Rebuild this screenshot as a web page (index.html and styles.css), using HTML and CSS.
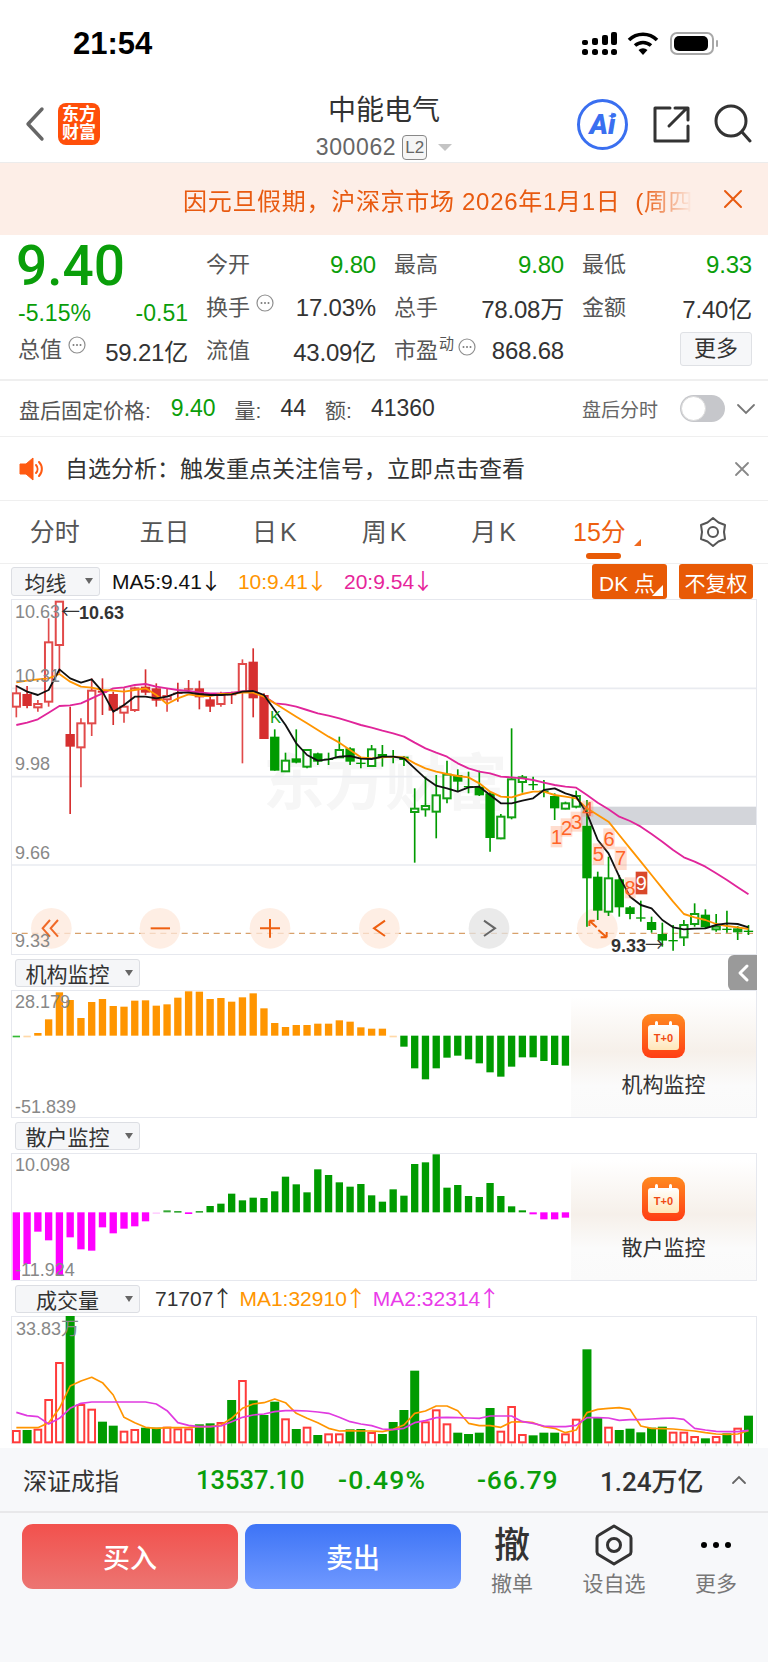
FILE: index.html
```html
<!DOCTYPE html>
<html lang="zh-CN">
<head>
    <meta charset="UTF-8">
    <meta name="viewport" content="width=device-width, initial-scale=1.0">
    <title>中能电气</title>
    <link rel="stylesheet" href="styles.css">
</head>
<body>
    <svg class="sprite">
        <symbol id="info" viewBox="0 0 18 18">
            <circle cx="9" cy="9" r="8" fill="none" stroke="#8f8f8f" stroke-width="1.2"/>
            <circle cx="5.5" cy="9" r="1" fill="#7a7a7a"/>
            <circle cx="9" cy="9" r="1" fill="#7a7a7a"/>
            <circle cx="12.5" cy="9" r="1" fill="#7a7a7a"/>
        </symbol>
    </svg>

    <div class="status">
        <span class="time">21:54</span>
        <div class="status-icons">
            <svg class="signal" width="36" height="24" viewBox="0 0 36 24">
                <rect x="0" y="8" width="6" height="5" rx="2"/>
                <rect x="0" y="17" width="6" height="6" rx="2.5"/>
                <rect x="10" y="6" width="6" height="7" rx="2"/>
                <rect x="10" y="17" width="6" height="6" rx="2.5"/>
                <rect x="20" y="3" width="6" height="10" rx="2"/>
                <rect x="20" y="17" width="6" height="6" rx="2.5"/>
                <rect x="29" y="0" width="6" height="13" rx="2"/>
                <rect x="29" y="17" width="6" height="6" rx="2.5"/>
            </svg>
            <svg width="32" height="24" viewBox="0 0 32 24">
                <path d="M2 8 A20 20 0 0 1 30 8" fill="none" stroke="#000" stroke-width="3.6"/>
                <path d="M8 13.5 A12 12 0 0 1 24 13.5" fill="none" stroke="#000" stroke-width="3.6"/>
                <path d="M11.5 18 A7 7 0 0 1 20.5 18 L16 23 Z"/>
            </svg>
            <div class="battery"><div class="battery-fill"></div></div>
        </div>
    </div>

    <div class="nav">
        <div class="nav-left">
            <svg width="20" height="36" viewBox="0 0 20 36">
                <path d="M17 3 L3 18 L17 33" fill="none" stroke="#666" stroke-width="3.4" stroke-linecap="round" stroke-linejoin="round"/>
            </svg>
            <div class="logo"><span>东方</span><span>财富</span></div>
        </div>
        <div class="nav-title">
            <div class="stock-name">中能电气</div>
            <div class="stock-code">
                <span class="code-num">300062</span>
                <span class="l2">L2</span>
                <span class="code-arrow"></span>
            </div>
        </div>
        <div class="nav-right">
            <div class="ai-btn">Ai
                <svg class="ai-star" width="8" height="8" viewBox="0 0 8 8"><path d="M4 0 L5 3 L8 4 L5 5 L4 8 L3 5 L0 4 L3 3 Z" fill="#3a6ff0"/></svg>
            </div>
            <svg width="38" height="38" viewBox="0 0 38 38" fill="none" stroke="#333" stroke-width="3" stroke-linecap="round" stroke-linejoin="round">
                <path d="M18 3 H3 V36 H36 V21"/>
                <path d="M17 21 L35 3 M23 3 H36 V15"/>
            </svg>
            <svg width="38" height="40" viewBox="0 0 38 40" fill="none" stroke="#333" stroke-width="3" stroke-linecap="round">
                <circle cx="17" cy="17" r="15"/>
                <path d="M28 28 L36 37"/>
            </svg>
        </div>
    </div>

    <div class="banner">
        <div class="banner-text">因元旦假期，沪深京市场 2026年1月1日 &nbsp;(周四</div>
        <svg class="banner-close" width="20" height="20" viewBox="0 0 20 20"><path d="M2 2 L18 18 M18 2 L2 18" stroke="#e85a10" stroke-width="2" stroke-linecap="round"/></svg>
    </div>

    <div class="quote">
        <div class="quote-left">
            <div class="price">9.40</div>
            <div class="change"><span>-5.15%</span><span>-0.51</span></div>
            <div class="cell total"><span class="label">总值<svg class="info"><use href="#info"/></svg></span><span class="value">59.21亿</span></div>
        </div>
        <div class="quote-grid">
            <div class="cell"><span class="label">今开</span><span class="value down">9.80</span></div>
            <div class="cell"><span class="label">最高</span><span class="value down">9.80</span></div>
            <div class="cell"><span class="label">最低</span><span class="value down">9.33</span></div>
            <div class="cell"><span class="label">换手<svg class="info"><use href="#info"/></svg></span><span class="value">17.03%</span></div>
            <div class="cell"><span class="label">总手</span><span class="value">78.08万</span></div>
            <div class="cell"><span class="label">金额</span><span class="value">7.40亿</span></div>
            <div class="cell"><span class="label">流值</span><span class="value">43.09亿</span></div>
            <div class="cell"><span class="label">市盈<sup class="dyn">动</sup><svg class="info info-tight"><use href="#info"/></svg></span><span class="value">868.68</span></div>
            <div class="cell cell-end"><button class="more-btn">更多</button></div>
        </div>
    </div>

    <div class="after-hours">
        <span class="ah-title">盘后固定价格:</span>
        <span class="ah-green">9.40</span>
        <span class="ah-key">量:</span>
        <span class="ah-val">44</span>
        <span class="ah-key">额:</span>
        <span class="ah-val">41360</span>
        <span class="ah-switch-label">盘后分时</span>
        <div class="toggle"><div class="knob"></div></div>
        <svg width="20" height="12" viewBox="0 0 20 12"><path d="M2 2 L10 10 L18 2" fill="none" stroke="#777" stroke-width="1.8" stroke-linecap="round"/></svg>
    </div>

    <div class="notice">
        <svg width="26" height="26" viewBox="0 0 26 26">
            <path d="M1 8 H7 L14 2 V24 L7 18 H1 Z" fill="#ff5a12" stroke="#ff5a12" stroke-linejoin="round"/>
            <path d="M17 9 A6 6 0 0 1 17 17 M20 6 A10 10 0 0 1 20 20" fill="none" stroke="#ff5a12" stroke-width="2" stroke-linecap="round"/>
        </svg>
        <span class="notice-text">自选分析：触发重点关注信号，立即点击查看</span>
        <svg class="notice-close" width="16" height="16" viewBox="0 0 16 16"><path d="M2 2 L14 14 M14 2 L2 14" stroke="#888" stroke-width="1.8" stroke-linecap="round"/></svg>
    </div>

    <div class="tabs">
        <div class="tab">分时</div>
        <div class="tab">五日</div>
        <div class="tab">日<span class="tab-k">K</span></div>
        <div class="tab">周<span class="tab-k">K</span></div>
        <div class="tab">月<span class="tab-k">K</span></div>
        <div class="tab tab-active">15分</div>
        <div class="tab">
            <svg width="32" height="32" viewBox="0 0 32 32" fill="none" stroke="#555" stroke-width="2" stroke-linejoin="round">
                <path d="M16 2 L21.5 6.5 L28 9 L27 16 L28 23 L21.5 25.5 L16 30 L10.5 25.5 L4 23 L5 16 L4 9 L10.5 6.5 Z"/>
                <circle cx="16" cy="16" r="5"/>
            </svg>
        </div>
    </div>

    <div class="chart-bar main-bar">
        <div class="select select-ma"><span>均线</span><i></i></div>
        <div class="legend">
            <span class="c-black">MA5:9.41<span class="arr">↓</span></span>
            <span class="c-orange">10:9.41<span class="arr">↓</span></span>
            <span class="c-pink">20:9.54<span class="arr">↓</span></span>
        </div>
        <div class="bar-btns">
            <button class="org-btn org-btn-dk">DK 点</button>
            <button class="org-btn">不复权</button>
        </div>
    </div>
    <div class="chart-box chart-main">
        <svg id="mainChart" viewBox="33 117 2238 1068"></svg>
        <span class="axis axis-a">10.63</span>
        <span class="axis axis-b">10.31</span>
        <span class="axis axis-c">9.98</span>
        <span class="axis axis-d">9.66</span>
        <span class="axis axis-e">9.33</span>
        <span class="mark mark-high"><span class="mark-arrow">←</span>10.63</span>
        <span class="mark mark-low">9.33<span class="mark-arrow">→</span></span>
    </div>

    <div class="chart-bar">
        <div class="select"><span>机构监控</span><i></i></div>
        <div class="side-tab">
            <svg width="14" height="20" viewBox="0 0 14 20"><path d="M11 3 L4 10 L11 17" fill="none" stroke="#fff" stroke-width="3" stroke-linecap="round" stroke-linejoin="round"/></svg>
        </div>
    </div>
    <div class="chart-box chart-sub">
        <svg id="instChart" viewBox="33 120 2238 384"></svg>
        <span class="axis axis-top">28.179</span>
        <span class="axis axis-bottom">-51.839</span>
        <div class="promo">
            <div class="promo-icon"><div class="promo-cal">T+0</div></div>
            <div class="promo-label">机构监控</div>
        </div>
    </div>

    <div class="chart-bar">
        <div class="select"><span>散户监控</span><i></i></div>
    </div>
    <div class="chart-box chart-sub">
        <svg id="retailChart" viewBox="33 609 2238 384"></svg>
        <span class="axis axis-top">10.098</span>
        <span class="axis axis-bottom">-11.924</span>
        <div class="promo">
            <div class="promo-icon"><div class="promo-cal">T+0</div></div>
            <div class="promo-label">散户监控</div>
        </div>
    </div>

    <div class="chart-bar">
        <div class="select"><span>成交量</span><i></i></div>
        <div class="legend legend-vol">
            <span class="c-dark">71707<span class="arr">↑</span></span>
            <span class="c-orange">MA1:32910<span class="arr">↑</span></span>
            <span class="c-magenta">MA2:32314<span class="arr">↑</span></span>
        </div>
    </div>
    <div class="chart-box chart-sub chart-vol">
        <svg id="volChart" viewBox="33 108 2238 384"></svg>
        <span class="axis axis-top">33.83万</span>
    </div>

    <div class="footer">
        <div class="index-row">
            <span class="index-name">深证成指</span>
            <span class="index-num">13537.10</span>
            <span class="index-num index-pct">-0.49%</span>
            <span class="index-num index-chg">-66.79</span>
            <span class="index-amt">1.24万亿</span>
            <svg class="index-caret" width="16" height="10" viewBox="0 0 16 10"><path d="M2 8 L8 2 L14 8" fill="none" stroke="#666" stroke-width="1.8" stroke-linecap="round"/></svg>
        </div>
        <div class="trade-row">
            <button class="trade-btn buy">买入</button>
            <button class="trade-btn sell">卖出</button>
            <div class="trade-item">
                <div class="trade-icon cancel-char">撤</div>
                <span>撤单</span>
            </div>
            <div class="trade-item">
                <div class="trade-icon">
                    <svg width="38" height="42" viewBox="0 0 38 42" fill="none" stroke="#333" stroke-width="3" stroke-linejoin="round">
                        <path d="M19 2 L34 11 Q36 12 36 14 V28 Q36 30 34 31 L19 40 L4 31 Q2 30 2 28 V14 Q2 12 4 11 Z"/>
                        <circle cx="19" cy="21" r="6.5"/>
                    </svg>
                </div>
                <span>设自选</span>
            </div>
            <div class="trade-item">
                <div class="trade-icon">
                    <svg width="32" height="8" viewBox="0 0 32 8"><circle cx="4" cy="4" r="3"/><circle cx="16" cy="4" r="3"/><circle cx="28" cy="4" r="3"/></svg>
                </div>
                <span>更多</span>
            </div>
        </div>
    </div>

    <script src="chart.js"></script>
</body>
</html>
```

FILE: styles.css
```css
* {
    box-sizing: border-box;
}

body {
    margin: 0;
    width: 768px;
    height: 1662px;
    overflow: hidden;
    background-color: #fff;
    color: #333;
    font-family: "Liberation Sans", "Noto Sans CJK SC", sans-serif;
}

button {
    font-family: inherit;
    border: none;
    padding: 0;
}

.sprite {
    display: none;
}

/* status bar */
.status {
    height: 85px;
    display: flex;
    align-items: center;
    padding: 2px 54px 0 73px;
    justify-content: space-between;
}

.time {
    font-size: 31px;
    font-weight: bold;
    color: #000;
}

.status-icons {
    display: flex;
    align-items: center;
    gap: 9px;
}

.battery {
    position: relative;
    width: 44px;
    height: 23px;
    border: 2px solid #a8a8a8;
    border-radius: 7px;
    padding: 2px;
    margin-left: 2px;
}

.battery::after {
    content: "";
    position: absolute;
    right: -6px;
    top: 6px;
    width: 2px;
    height: 7px;
    border-radius: 1px;
    background-color: #a8a8a8;
}

.battery-fill {
    width: 34px;
    height: 15px;
    background-color: #000;
    border-radius: 5px;
}

/* nav */
.nav {
    height: 78px;
    display: grid;
    grid-template-columns: 1fr auto 1fr;
    align-items: center;
    border-bottom: 1px solid #ececec;
}

.nav-left {
    display: flex;
    align-items: center;
    gap: 13px;
    padding-left: 25px;
}

.logo {
    width: 42px;
    height: 42px;
    background-color: #ff4f0a;
    border-radius: 8px;
    color: #fff;
    font-size: 17px;
    font-weight: bold;
    line-height: 18px;
    display: flex;
    flex-direction: column;
    align-items: center;
    justify-content: center;
}

.nav-title {
    text-align: center;
    padding-top: 8px;
}

.stock-name {
    font-size: 28px;
    line-height: 34px;
    color: #333;
}

.stock-code {
    display: flex;
    align-items: center;
    gap: 6px;
    margin-top: 5px;
    font-size: 23px;
    line-height: 28px;
    color: #666;
}

.code-num {
    letter-spacing: 0.6px;
}

.l2 {
    border: 1px solid #888;
    border-radius: 4px;
    font-size: 17px;
    line-height: 23px;
    width: 25px;
    text-align: center;
    background-color: #f5f5f5;
}

.code-arrow {
    width: 0;
    height: 0;
    margin-left: 5px;
    border-left: 7px solid transparent;
    border-right: 7px solid transparent;
    border-top: 7px solid #c4c4c4;
}

.nav-right {
    display: flex;
    align-items: center;
    justify-content: flex-end;
    gap: 24px;
    padding-right: 16px;
}

.ai-btn {
    position: relative;
    width: 51px;
    height: 51px;
    border: 3px solid #3a6ff0;
    border-radius: 50%;
    color: #3a6ff0;
    font-family: Roboto, sans-serif;
    font-size: 28px;
    font-weight: 900;
    font-style: italic;
    line-height: 45px;
    text-align: center;
    margin-top: 2px;
}

.ai-star {
    position: absolute;
    top: 10px;
    right: 9px;
}

/* holiday banner */
.banner {
    height: 72px;
    background-color: #fdeee7;
    display: flex;
    align-items: center;
    padding-left: 183px;
}

.banner-text {
    width: 510px;
    white-space: nowrap;
    font-size: 24px;
    letter-spacing: 0.7px;
    color: #e85a10;
    -webkit-mask-image: linear-gradient(to right, #000 90%, transparent 100%);
    mask-image: linear-gradient(to right, #000 90%, transparent 100%);
}

.banner-close {
    margin-left: 30px;
}

/* quote */
.quote {
    height: 146px;
    display: flex;
    padding: 8px 16px 0 18px;
    border-bottom: 2px solid #efefef;
}

.quote-left {
    width: 170px;
    margin-right: 18px;
    margin-top: -8px;
}

.price {
    font-family: Roboto, sans-serif;
    font-size: 55px;
    font-weight: 500;
    line-height: 62px;
    margin-left: -2px;
    color: #0a9e0a;
}

.change {
    display: flex;
    justify-content: space-between;
    height: 32px;
    line-height: 32px;
    font-size: 23px;
    color: #0a9e0a;
}

.quote-grid {
    flex: 1;
    display: grid;
    grid-template-columns: 170px 170px 170px;
    column-gap: 18px;
    grid-auto-rows: 43px;
}

.cell {
    display: flex;
    align-items: center;
    justify-content: space-between;
    font-size: 24px;
}

.total {
    height: 42px;
}

.cell-end {
    justify-content: flex-end;
}

.label {
    display: flex;
    align-items: flex-start;
    font-size: 22px;
    line-height: 30px;
    color: #555;
}

.value {
    color: #333;
    white-space: nowrap;
    letter-spacing: -0.2px;
}

.value.down {
    color: #0a9e0a;
}

.info {
    width: 18px;
    height: 18px;
    margin-left: 6px;
    margin-top: 1px;
}

.info-tight {
    margin-left: 4px;
    margin-top: 2px;
}

.dyn {
    font-size: 15px;
    line-height: 18px;
    margin-top: -1px;
    margin-left: 1px;
    vertical-align: baseline;
}

.more-btn {
    width: 72px;
    height: 34px;
    margin-top: -3px;
    background-color: #f6f7f9;
    border: 1px solid #dfe1e5;
    border-radius: 3px;
    color: #333;
    font-size: 22px;
    line-height: 30px;
}

/* after hours row */
.after-hours {
    height: 56px;
    display: flex;
    align-items: center;
    padding-left: 19px;
    border-bottom: 1px solid #efefef;
    font-size: 21px;
    color: #555;
}

.ah-green {
    margin-left: 20px;
    color: #0a9e0a;
    font-size: 23px;
}

.ah-key {
    margin-left: 19px;
}

.ah-val {
    margin-left: 19px;
    color: #333;
    font-size: 23px;
}

.ah-switch-label {
    margin-left: auto;
    font-size: 19px;
    color: #666;
}

.toggle {
    width: 45px;
    height: 27px;
    margin: 0 11px 0 22px;
    border-radius: 14px;
    background-color: #c6c7cb;
    padding: 1px;
}

.knob {
    width: 25px;
    height: 25px;
    border-radius: 50%;
    background-color: #fff;
    border: 1px solid #dadada;
}

.after-hours svg {
    margin-right: 12px;
}

/* notice row */
.notice {
    height: 64px;
    display: flex;
    align-items: center;
    padding-left: 19px;
    border-bottom: 1px solid #efefef;
}

.notice-text {
    margin-left: 20px;
    margin-top: -3px;
    font-size: 23px;
    color: #333;
}

.notice-close {
    margin-left: auto;
    margin-right: 18px;
}

/* period tabs */
.tabs {
    height: 63px;
    display: grid;
    grid-template-columns: repeat(7, 1fr);
    align-items: center;
    border-bottom: 1px solid #efefef;
}

.tab {
    position: relative;
    text-align: center;
    font-size: 25px;
    line-height: 32px;
    color: #555;
    display: flex;
    align-items: center;
    justify-content: center;
    white-space: pre;
}

.tab-k {
    margin-left: 3px;
}

.tab-active {
    color: #ee5f10;
    padding-right: 8px;
}

.tab-active::before {
    content: "";
    position: absolute;
    left: 37px;
    right: 37px;
    bottom: -11px;
    height: 6px;
    border-radius: 3px;
    background-color: #e85a06;
}

.tab-active::after {
    content: "";
    position: absolute;
    right: 17px;
    bottom: 2px;
    border-left: 7px solid transparent;
    border-bottom: 7px solid #f0691e;
}

/* toolbars above each chart */
.chart-bar {
    width: 746px;
    height: 35px;
    margin-left: 11px;
    padding-left: 4px;
    display: flex;
    align-items: center;
}

.main-bar {
    padding-left: 0;
}

.select {
    width: 125px;
    height: 28px;
    padding-right: 20px;
    display: flex;
    align-items: center;
    justify-content: center;
    position: relative;
    background-color: #f5f6f8;
    border: 1px solid #dcdee3;
    border-radius: 3px;
    font-size: 21px;
    color: #333;
}

.select i {
    position: absolute;
    right: 6px;
    top: 10px;
    border-left: 4px solid transparent;
    border-right: 4px solid transparent;
    border-top: 6px solid #666;
}

.select-ma {
    width: 89px;
    height: 29px;
}

.legend {
    display: flex;
    gap: 18px;
    margin-left: 12px;
    font-size: 21px;
    white-space: nowrap;
}

.legend-vol {
    gap: 8px;
    margin-left: 15px;
}

.arr {
    font-family: "Noto Sans CJK SC", sans-serif;
    font-size: 22px;
    line-height: 21px;
    margin-left: -2px;
    margin-right: -2px;
}

.c-black { color: #111; }
.c-dark { color: #333; }
.c-orange { color: #ff9500; }
.c-pink { color: #e6259a; }
.c-magenta { color: #e93be9; }

.bar-btns {
    margin-left: auto;
    padding-right: 4px;
    display: flex;
    gap: 12px;
}

.org-btn {
    position: relative;
    width: 74px;
    height: 35px;
    background-color: #e85a06;
    border-radius: 3px;
    color: #fff;
    font-size: 21px;
    white-space: nowrap;
}

.org-btn-dk {
    width: 75px;
    text-align: left;
    padding-left: 7px;
}

.org-btn-dk::after {
    content: "";
    position: absolute;
    right: 4px;
    bottom: 3px;
    border-left: 11px solid transparent;
    border-bottom: 11px solid #fff;
}

.side-tab {
    margin-left: auto;
    width: 29px;
    height: 36px;
    background-color: #9a9a9a;
    border-radius: 6px 0 0 6px;
    display: flex;
    align-items: center;
    justify-content: center;
    align-self: flex-start;
}

/* chart frames */
.chart-box {
    position: relative;
    width: 746px;
    margin-left: 11px;
    outline: 1px solid #e6e8ee;
    outline-offset: -1px;
}

.chart-main {
    height: 356px;
}

.chart-sub {
    height: 128px;
}

.chart-vol {
    outline: none;
    border-top: 1px solid #e6e8ee;
    border-left: 1px solid #e6e8ee;
    border-right: 1px solid #e6e8ee;
}

.chart-box svg {
    display: block;
    width: 100%;
    height: 100%;
    overflow: visible;
}

.chart-vol svg {
    position: absolute;
    left: -1px;
    top: -1px;
    width: 746px;
    height: 128px;
}

.chart-box text {
    font-family: "Liberation Sans", "Noto Sans CJK SC", sans-serif;
}

.axis {
    position: absolute;
    left: 4px;
    font-size: 18px;
    line-height: 20px;
    color: #888;
}

.axis-a { top: 3px; }
.axis-b { top: 67px; }
.axis-c { top: 155px; }
.axis-d { top: 244px; }
.axis-e { top: 332px; }
.axis-top { top: 2px; }
.axis-bottom { bottom: 1px; }

.mark {
    position: absolute;
    font-size: 18px;
    font-weight: bold;
    line-height: 20px;
    white-space: nowrap;
    color: #333;
}

.mark-arrow {
    font-family: "Noto Sans CJK SC", sans-serif;
    font-size: 19px;
    font-weight: 400;
    margin: 0 -1px;
}

.mark-high {
    left: 51px;
    top: 2px;
}

.mark-low {
    left: 600px;
    top: 335px;
}

/* T+0 promo over the chart's right side */
.promo {
    position: absolute;
    top: 1px;
    right: 1px;
    bottom: 1px;
    width: 185px;
    display: flex;
    flex-direction: column;
    align-items: center;
    background: linear-gradient(to bottom, #fff 5%, #f6f0ea 48%, #fbfbfb 75%, #fafafa);
}

.promo-icon {
    width: 43px;
    height: 44px;
    margin-top: 23px;
    border-radius: 9px;
    background: linear-gradient(to bottom, #ff8a20, #ff3d14);
    display: flex;
    align-items: center;
    justify-content: center;
}

.promo-cal {
    position: relative;
    width: 31px;
    height: 25px;
    margin-top: 2px;
    border-radius: 3px;
    background: linear-gradient(to bottom, #fff, #ffe6b8);
    color: #f04a14;
    font-size: 11px;
    font-weight: bold;
    line-height: 27px;
    text-align: center;
}

.promo-cal::before,
.promo-cal::after {
    content: "";
    position: absolute;
    top: -4px;
    width: 3px;
    height: 7px;
    border-radius: 2px;
    background-color: #fff;
}

.promo-cal::before { left: 7px; }
.promo-cal::after { right: 7px; }

.promo-label {
    margin-top: 10px;
    font-size: 21px;
    color: #333;
}

/* footer */
.footer {
    margin-top: 4px;
    height: 214px;
    background-color: #f7f8fa;
}

.index-row {
    height: 65px;
    display: grid;
    grid-template-columns: 173px 142px 139px 123px 139px auto;
    align-items: center;
    padding-left: 23px;
    border-bottom: 2px solid #e8e8ea;
    font-size: 24px;
}

.index-name {
    color: #333;
}

.index-num {
    color: #0a9e0a;
    font-family: Roboto, sans-serif;
    font-weight: 500;
    font-size: 25.5px;
}

.index-pct {
    font-size: 26.5px;
    letter-spacing: 1.2px;
}

.index-chg {
    font-size: 26.5px;
    letter-spacing: 0.8px;
}

.index-amt {
    color: #333;
    font-family: Roboto, "Noto Sans CJK SC", sans-serif;
    font-weight: 500;
    font-size: 26px;
}

.index-caret {
    margin-left: -8px;
}

.trade-row {
    display: flex;
    padding: 11px 0 0 22px;
}

.trade-btn {
    width: 216px;
    height: 65px;
    border-radius: 11px;
    color: #fff;
    font-size: 27px;
    font-weight: 500;
}

.buy {
    margin-right: 7px;
    background: linear-gradient(to bottom, #f2514d, #ec7572);
}

.sell {
    background: linear-gradient(to bottom, #3d74f6, #7099ff);
}

.trade-item {
    width: 102px;
    display: flex;
    flex-direction: column;
    align-items: center;
    font-size: 21px;
    color: #777;
}

.trade-icon {
    height: 42px;
    display: flex;
    align-items: center;
    justify-content: center;
    margin-bottom: 1px;
    color: #333;
}

.cancel-char {
    font-size: 36px;
    font-weight: 500;
    margin-top: -3px;
    margin-bottom: 4px;
}
```

FILE: chart.js
```js
// coordinates below are in chart units: 3 per pixel, measured from x=0, y=560 of the page
const svgNS = 'http://www.w3.org/2000/svg'

const GREEN = '#009b00'
const RED = '#d62f2f'
const ORANGE = '#ff9500'

function add(svg, tag, attrs, text) {
    const el = document.createElementNS(svgNS, tag)
    for (const key in attrs) {
        el.setAttribute(key, attrs[key])
    }
    if (text) {
        el.textContent = text
    }
    svg.appendChild(el)
    return el
}

function barX(i) {
    return 49 + 32.3 * i
}

function drawLine(svg, ys, color, width) {
    const points = ys.map((y, i) => barX(i) + ',' + y).join(' ')
    add(svg, 'polyline', {
        points: points,
        fill: 'none',
        stroke: color,
        'stroke-width': width,
        'stroke-linejoin': 'round'
    })
}

// hi, lo, bodyTop, bodyBottom, type: r hollow red, R solid red, g hollow green, G solid green
const candles = [
    [375, 472, 400, 440, 'r'], [378, 445, 402, 438, 'R'], [420, 455, 432, 442, 'r'],
    [175, 440, 247, 425, 'r'], [125, 340, 125, 255, 'r'], [440, 762, 522, 560, 'R'],
    [475, 682, 490, 562, 'r'], [355, 528, 392, 490, 'r'], [355, 465, 392, 398, 'R'],
    [395, 495, 402, 452, 'R'], [385, 488, 440, 458, 'r'], [380, 456, 385, 450, 'r'],
    [328, 405, 380, 398, 'R'], [370, 440, 385, 422, 'R'], [385, 455, 408, 418, 'r'],
    [368, 425, 398, 402, 'R'], [360, 398, 385, 388, 'R'], [362, 448, 385, 412, 'R'],
    [410, 456, 418, 440, 'R'], [395, 440, 405, 432, 'r'], [395, 432, 402, 405, 'R'],
    [298, 610, 312, 395, 'r'], [265, 472, 305, 415, 'R'], [400, 537, 405, 537, 'R'],
    [508, 632, 530, 632, 'G'], [578, 634, 602, 634, 'g'], [508, 610, 595, 608, 'G'],
    [570, 625, 570, 620, 'g'], [578, 615, 580, 605, 'G'], [578, 615, 596, 600, 'G'],
    [530, 592, 570, 592, 'g'], [562, 615, 565, 605, 'G'], [595, 625, 608, 612, 'G'],
    [555, 620, 568, 618, 'g'], [555, 620, 582, 592, 'G'], [570, 610, 588, 592, 'G'],
    [588, 618, 590, 600, 'G'], [685, 908, 746, 756, 'g'], [650, 770, 738, 748, 'g'],
    [645, 835, 706, 755, 'g'], [602, 730, 644, 715, 'g'], [628, 695, 645, 665, 'G'],
    [635, 700, 678, 682, 'G'], [632, 708, 680, 706, 'G'], [695, 875, 700, 834, 'G'],
    [762, 838, 770, 835, 'g'], [505, 778, 658, 772, 'g'], [645, 698, 652, 666, 'g'],
    [650, 690, 672, 676, 'G'], [660, 712, 692, 696, 'G'], [700, 780, 708, 745, 'G'],
    [725, 748, 730, 746, 'g'], [692, 745, 708, 740, 'g'], [720, 1100, 797, 955, 'G'],
    [935, 1080, 950, 1052, 'G'], [890, 1068, 955, 1055, 'g'], [945, 1070, 958, 1042, 'G'],
    [1038, 1078, 1042, 1062, 'G'], [1022, 1085, 1072, 1076, 'G'], [1070, 1118, 1086, 1110, 'G'],
    [1088, 1160, 1122, 1142, 'G'], [1095, 1172, 1140, 1143, 'G'], [1080, 1158, 1095, 1132, 'g'],
    [1030, 1100, 1062, 1092, 'g'], [1048, 1106, 1064, 1102, 'G'], [1062, 1115, 1100, 1108, 'g'],
    [1052, 1118, 1106, 1110, 'G'], [1098, 1140, 1108, 1114, 'g'], [1095, 1125, 1112, 1115, 'G']
]

const ma5 = [378, 395, 405, 390, 328, 355, 368, 358, 395, 455, 435, 410, 410, 415, 410, 398, 398, 402,
    405, 405, 403, 395, 393, 405, 450, 495, 550, 585, 602, 598, 590, 588, 596, 597, 590, 590, 595, 625,
    655, 677, 685, 695, 682, 680, 705, 730, 730, 722, 715, 690, 685, 700, 710, 760, 840, 880, 950, 1010,
    1035, 1045, 1080, 1102, 1108, 1106, 1105, 1095, 1090, 1092, 1102]
const ma10 = [367, 362, 358, 355, 342, 365, 380, 383, 390, 392, 395, 390, 385, 405, 432, 415, 403, 408,
    408, 402, 402, 398, 398, 410, 430, 450, 470, 490, 510, 530, 548, 570, 592, 595, 592, 590, 592, 610,
    625, 635, 642, 648, 652, 670, 695, 710, 712, 702, 695, 695, 705, 710, 715, 745, 765, 785, 825, 865,
    905, 945, 985, 1025, 1062, 1072, 1080, 1092, 1098, 1102, 1107]
const ma20 = [495, 488, 478, 458, 438, 436, 430, 415, 400, 385, 382, 375, 372, 380, 385, 390, 393, 397,
    400, 400, 398, 394, 393, 408, 430, 433, 440, 450, 460, 467, 475, 485, 495, 503, 512, 520, 530, 548,
    565, 578, 590, 610, 625, 635, 640, 650, 652, 655, 660, 668, 675, 680, 683, 705, 728, 748, 770, 783,
    800, 822, 845, 870, 892, 905, 920, 940, 960, 982, 1003]

const marks = [
    [500, 798, 35, 64, '1'], [530, 775, 35, 55, '2'], [560, 755, 35, 60, '3'],
    [595, 722, 33, 48, '4'], [626, 850, 34, 65, '5'], [658, 805, 34, 63, '6'],
    [692, 860, 36, 70, '7'], [722, 952, 33, 63, '8']
]

function drawCandle(svg, c, i) {
    const x = barX(i)
    const isRed = c[4] === 'r' || c[4] === 'R'
    const color = isRed ? RED : GREEN
    const hollow = c[4] === 'r' || c[4] === 'g'
    add(svg, 'line', { x1: x, x2: x, y1: c[0], y2: c[1], stroke: hollow && isRed ? '#e14a4a' : color, 'stroke-width': 5 })
    const height = Math.max(c[3] - c[2], 4)
    if (hollow) {
        add(svg, 'rect', {
            x: x - 11, y: c[2], width: 22, height: height,
            fill: '#fff', stroke: isRed ? '#e14a4a' : '#12a012', 'stroke-width': 6
        })
    } else {
        add(svg, 'rect', { x: x - 14, y: c[2], width: 28, height: height, fill: color })
    }
}

function drawControl(svg, cx, fill, path, color) {
    add(svg, 'circle', { cx: cx, cy: 1105, r: 61, fill: fill, 'fill-opacity': 0.75 })
    add(svg, 'path', { d: path, fill: 'none', stroke: color, 'stroke-width': 6 })
}

function drawMain() {
    const svg = document.getElementById('mainChart')
    add(svg, 'text', {
        x: 790, y: 735, fill: '#f6f6f6', 'font-size': 183, 'font-weight': 'bold'
    }, '东方财富')
    const grid = [385, 650, 915]
    grid.forEach(y => add(svg, 'line', { x1: 33, x2: 2271, y1: y, y2: y, stroke: '#e9ebf0', 'stroke-width': 5 }))
    add(svg, 'rect', { x: 1742, y: 740, width: 529, height: 55, fill: '#d3d5da' })
    add(svg, 'line', {
        x1: 33, x2: 2271, y1: 1120, y2: 1120, stroke: '#d8a16b', 'stroke-width': 4, 'stroke-dasharray': '18 14'
    })
    const controls = [
        [154, '#fde8db', 'M150 1080 L128 1105 L150 1130 M174 1080 L152 1105 L174 1130', '#f06a28'],
        [480, '#fde8db', 'M452 1105 H510', '#ee5f10'],
        [810, '#fde8db', 'M780 1105 H840 M810 1077 V1133', '#ee5f10'],
        [1138, '#fde8db', 'M1155 1082 L1122 1105 L1155 1128', '#ee5f10'],
        [1467, '#e3e3e3', 'M1452 1082 L1485 1105 L1452 1128', '#666'],
        [1792, '#fde8db', 'M1768 1082 L1790 1102 M1768 1082 V1098 M1768 1082 H1784 M1795 1110 L1820 1132 M1820 1132 V1116 M1820 1132 H1802', '#ee5f10']
    ]
    controls.forEach(c => drawControl(svg, c[0], c[1], c[2], c[3]))
    candles.forEach((c, i) => drawCandle(svg, c, i))
    drawLine(svg, ma20, '#e0259a', 5.5)
    drawLine(svg, ma10, ORANGE, 5.5)
    drawLine(svg, ma5, '#111', 5.5)
    add(svg, 'text', { x: 810, y: 490, fill: '#17a317', 'font-size': 50 }, 'K')
    marks.forEach(m => {
        add(svg, 'rect', { x: m[0] + 1152, y: m[1], width: m[2], height: m[3], fill: '#ff7a45', 'fill-opacity': 0.26 })
        add(svg, 'text', {
            x: m[0] + 1152 + m[2] / 2, y: m[1] + m[3] / 2 + 21, fill: '#ff6427', 'font-size': 60, 'text-anchor': 'middle'
        }, m[4])
    })
    add(svg, 'rect', { x: 1907, y: 935, width: 35, height: 68, fill: '#d9482a' })
    add(svg, 'text', { x: 1924, y: 990, fill: '#fff', 'font-size': 60, 'text-anchor': 'middle' }, '9')
}

function drawBars(svgId, base, bars, width) {
    const svg = document.getElementById(svgId)
    bars.forEach((b, i) => {
        const y = Math.min(b[0], base)
        const h = Math.max(Math.abs(b[0] - base), 5)
        add(svg, 'rect', { x: barX(i) - width / 2, y: y, width: width, height: h, fill: b[1] })
    })
}

function colored(values, color) {
    return values.map(v => [v, color])
}

function drawInst() {
    const M = '#ff9500'
    const bars = [[260, '#35b935'], [259, '#ffd9a8'], [249, M]]
        .concat(colored([208, 127, 150, 204, 156, 147, 168, 170, 152, 151, 167, 163, 143, 124, 125, 147,
            144, 155, 142, 130, 175, 219, 231, 225, 225, 221, 221, 211, 215, 232, 236, 236], M))
        .concat([[259, '#ffd9a8']])
        .concat(colored([290, 355, 388, 355, 323, 317, 328, 340, 367, 380, 350, 322, 322, 333, 345, 347], GREEN))
    drawBars('instChart', 257, bars, 22)
}

function drawRetail() {
    const P = '#ff00ff'
    const bars = colored([990, 942, 845, 871, 975, 862, 898, 902, 832, 850, 836, 829, 814], P)
        .concat([[790, '#ffd0ff'], [781, '#35a835'], [783, '#35a835'], [792, P], [783, '#35a835']])
        .concat(colored([768, 761, 731, 751, 743, 744, 724, 680, 703, 727, 658, 675, 697, 710, 702, 736, 755,
            718, 737, 642, 637, 613, 713, 705, 738, 741, 699, 738, 769, 781], GREEN))
        .concat(colored([793, 808, 808, 803], P))
    drawBars('retailChart', 787, bars, 22)
}

function drawVolume() {
    const svg = document.getElementById('volChart')
    const bars = [[450, 'r'], [450, 'g'], [446, 'r'], [357, 'r'], [246, 'r'], [108, 'g'], [372, 'r'], [386, 'r'],
        [425, 'g'], [437, 'g'], [452, 'r'], [447, 'r'], [443, 'g'], [443, 'g'], [440, 'r'], [445, 'r'], [445, 'r'],
        [433, 'g'], [430, 'g'], [426, 'r'], [360, 'g'], [300, 'r'], [361, 'g'], [405, 'g'], [365, 'g'], [415, 'r'],
        [447, 'g'], [440, 'r'], [465, 'g'], [460, 'r'], [460, 'r'], [448, 'g'], [447, 'g'], [456, 'r'], [462, 'g'],
        [426, 'g'], [390, 'g'], [272, 'g'], [424, 'r'], [388, 'r'], [430, 'r'], [458, 'g'], [462, 'g'], [458, 'g'],
        [384, 'g'], [452, 'r'], [378, 'r'], [462, 'r'], [466, 'g'], [458, 'g'], [458, 'g'], [460, 'r'], [416, 'r'],
        [208, 'g'], [412, 'g'], [440, 'r'], [450, 'g'], [446, 'g'], [457, 'g'], [443, 'g'], [440, 'g'], [455, 'r'],
        [455, 'r'], [468, 'r'], [475, 'g'], [468, 'r'], [460, 'g'], [443, 'r'], [407, 'g']]
    bars.forEach((b, i) => {
        const x = barX(i)
        if (i >= 17) {
            add(svg, 'line', { x1: x, x2: x, y1: 490, y2: 499, stroke: '#aaa', 'stroke-width': 2 })
        }
        if (b[1] === 'g') {
            add(svg, 'rect', { x: x - 13.5, y: b[0], width: 27, height: 490 - b[0], fill: GREEN })
        } else {
            add(svg, 'rect', {
                x: x - 10, y: b[0] + 3, width: 20, height: 487 - b[0] - 3,
                fill: '#fff', stroke: '#ff3b3b', 'stroke-width': 6
            })
        }
    })
    const ma1 = [443, 443, 443, 428, 385, 318, 303, 292, 308, 345, 412, 428, 442, 445, 443, 443, 442, 440, 440,
        435, 415, 385, 372, 368, 357, 368, 400, 415, 428, 445, 453, 452, 453, 453, 455, 448, 435, 400, 393, 378,
        378, 392, 430, 437, 437, 442, 426, 425, 428, 440, 445, 458, 450, 398, 388, 385, 383, 388, 438, 445, 446,
        447, 450, 453, 458, 462, 463, 462, 452]
    const ma2 = [397, 407, 410, 432, 415, 385, 370, 366, 366, 366, 366, 366, 366, 372, 392, 428, 436, 440, 440,
        438, 425, 412, 405, 402, 395, 392, 392, 393, 396, 400, 412, 425, 432, 437, 447, 449, 445, 428, 422, 413,
        412, 413, 414, 415, 408, 408, 408, 425, 430, 438, 440, 440, 436, 413, 413, 414, 421, 419, 419, 417, 415,
        414, 418, 445, 450, 454, 455, 455, 451]
    drawLine(svg, ma1, ORANGE, 5)
    drawLine(svg, ma2, '#e03be0', 5)
}

drawMain()
drawInst()
drawRetail()
drawVolume()
```
